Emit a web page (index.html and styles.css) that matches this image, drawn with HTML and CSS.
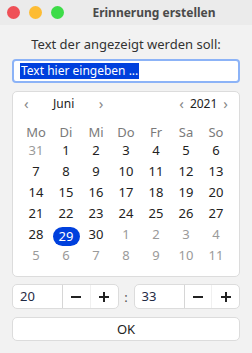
FILE: index.html
```html
<!DOCTYPE html>
<html lang="de">
<head>
<meta charset="utf-8">
<title>Erinnerung erstellen</title>
<link rel="stylesheet" href="styles.css">
</head>
<body>
<div class="window">
  <div class="titlebar">
    <div class="lights">
      <span class="light red"></span>
      <span class="light yellow"></span>
      <span class="light green"></span>
    </div>
    <div class="title">Erinnerung erstellen</div>
  </div>
  <div class="content">
    <div class="label">Text der angezeigt werden soll:</div>
    <div class="input"><span class="sel">Text hier eingeben ...</span></div>
    <div class="calendar">
      <div class="cal-head">
        <div class="nav month">
          <span class="arrow">‹</span>
          <span class="navtext">Juni</span>
          <span class="arrow">›</span>
        </div>
        <div class="nav year">
          <span class="arrow">‹</span>
          <span class="navtext">2021</span>
          <span class="arrow">›</span>
        </div>
      </div>
      <div class="grid weekdays">
        <span>Mo</span><span>Di</span><span>Mi</span><span>Do</span><span>Fr</span><span>Sa</span><span>So</span>
      </div>
      <div class="grid days">
        <span class="other">31</span><span>1</span><span>2</span><span>3</span><span>4</span><span>5</span><span>6</span>
        <span>7</span><span>8</span><span>9</span><span>10</span><span>11</span><span>12</span><span>13</span>
        <span>14</span><span>15</span><span>16</span><span>17</span><span>18</span><span>19</span><span>20</span>
        <span>21</span><span>22</span><span>23</span><span>24</span><span>25</span><span>26</span><span>27</span>
        <span>28</span><span class="selected"><b>29</b></span><span>30</span><span class="other">1</span><span class="other">2</span><span class="other">3</span><span class="other">4</span>
        <span class="other">5</span><span class="other">6</span><span class="other">7</span><span class="other">8</span><span class="other">9</span><span class="other">10</span><span class="other">11</span>
      </div>
    </div>
    <div class="time">
      <div class="spin">
        <div class="num">20</div>
        <div class="btn minus"><svg width="12" height="12" viewBox="0 0 12 12"><rect x="1" y="5" width="10" height="2" fill="#222"/></svg></div>
        <div class="btn plus"><svg width="12" height="12" viewBox="0 0 12 12"><rect x="1" y="5" width="10" height="2" fill="#222"/><rect x="5" y="1" width="2" height="10" fill="#222"/></svg></div>
      </div>
      <div class="colon">:</div>
      <div class="spin">
        <div class="num">33</div>
        <div class="btn minus"><svg width="12" height="12" viewBox="0 0 12 12"><rect x="1" y="5" width="10" height="2" fill="#222"/></svg></div>
        <div class="btn plus"><svg width="12" height="12" viewBox="0 0 12 12"><rect x="1" y="5" width="10" height="2" fill="#222"/><rect x="5" y="1" width="2" height="10" fill="#222"/></svg></div>
      </div>
    </div>
    <div class="ok">OK</div>
  </div>
</div>
</body>
</html>
```

FILE: styles.css
```css
* { box-sizing: border-box; }
html, body {
  margin: 0;
  padding: 0;
  width: 252px;
  height: 353px;
  overflow: hidden;
  background: #f2f2f2;
  font-family: "Noto Sans", "Open Sans", sans-serif;
  color: #222;
}
.window {
  width: 252px;
  height: 353px;
  display: flex;
  flex-direction: column;
}
.titlebar {
  height: 25px;
  background: #ebebeb;
  display: flex;
  align-items: center;
}
.lights {
  display: flex;
  gap: 9px;
  padding-left: 7px;
}
.light {
  width: 13px;
  height: 13px;
  border-radius: 50%;
  display: block;
}
.red { background: #ef5057; }
.yellow { background: #fdbc33; }
.green { background: #3ddc48; }
.title {
  flex: 1;
  text-align: center;
  padding-right: 8px;
  font-size: 12px;
  font-weight: bold;
  color: #4a4a4a;
}
.content {
  padding: 0 12px;
  display: flex;
  flex-direction: column;
}
.label {
  margin-top: 10px;
  height: 18px;
  line-height: 18px;
  text-align: center;
  font-size: 13px;
  color: #333;
}
.input {
  margin-top: 6px;
  height: 24px;
  border: 2px solid #8cb3f7;
  border-radius: 4px;
  background: #fff;
  display: flex;
  align-items: center;
  padding-left: 6px;
}
.sel {
  background: #0040dd;
  color: #fff;
  font-size: 12px;
  line-height: 16px;
  padding: 0 1px;
}
.calendar {
  margin-top: 8px;
  background: #fff;
  border: 1px solid #dcdcdc;
  border-radius: 5px;
  padding: 0 8px 10px 8px;
}
.cal-head {
  height: 22px;
  display: flex;
  justify-content: space-between;
  align-items: center;
  font-size: 12px;
}
.nav {
  display: flex;
  align-items: center;
}
.arrow {
  color: #888;
  font-size: 15px;
  line-height: 15px;
}
.month { padding-left: 3px; }
.month .navtext { width: 70px; text-align: center; }
.year { padding-right: 3px; gap: 6px; }
.grid {
  display: grid;
  grid-template-columns: repeat(7, 30px);
  text-align: center;
  font-size: 13px;
}
.weekdays {
  margin-top: 10px;
  height: 16px;
  line-height: 16px;
  color: #7a7a7a;
}
.days {
  grid-auto-rows: 21px;
  line-height: 21px;
}
.days .other { color: #9a9a9a; }
.days .selected {
  display: flex;
  align-items: center;
  justify-content: center;
}
.days .selected b {
  font-weight: normal;
  background: #0040dd;
  color: #fff;
  width: 27px;
  height: 19px;
  line-height: 19px;
  border-radius: 10px;
  margin-top: 3px;
}
.time {
  margin-top: 7px;
  display: flex;
  align-items: center;
}
.spin {
  flex: 1;
  height: 25px;
  background: #fff;
  border: 1px solid #dcdcdc;
  border-radius: 5px;
  display: flex;
}
.num {
  width: 50px;
  padding-left: 7px;
  font-size: 13px;
  line-height: 23px;
  color: #1f2a44;
  border-right: 1px solid #d6d6d6;
}
.btn {
  flex: 1;
  display: flex;
  align-items: center;
  justify-content: center;
}
.minus { border-right: 1px solid #f0f0f0; }
.colon {
  width: 15px;
  text-align: center;
  font-size: 13px;
  color: #555;
}
.ok {
  margin-top: 8px;
  height: 24px;
  background: #fff;
  border: 1px solid #dcdcdc;
  border-radius: 5px;
  text-align: center;
  line-height: 22px;
  font-size: 13px;
  color: #222;
}
```
